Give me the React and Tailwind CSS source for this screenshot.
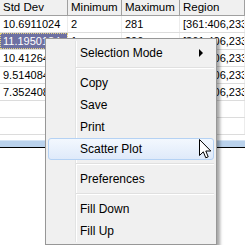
import React from 'react';

const cols = ['w-[68px]', 'w-[54px]', 'w-[58px]', 'flex-1'];

const rows = [
  ['10.6911024', '2', '281', '[361:406,233'],
  ['11.1950184', '1', '296', '[361:406,233'],
  ['10.4126435', '3', '274', '[361:406,233'],
  ['9.51408459', '2', '259', '[361:406,233'],
  ['7.35240841', '4', '212', '[361:406,233'],
  ['', '', '', ''],
  ['', '', '', ''],
];

function Item({ label, sub, hot }) {
  return (
    <div
      className={`relative z-10 flex items-center h-[22px] pl-[31px] pr-[10px] rounded-[3px] border ${
        hot
          ? 'border-[#b5d2f4] bg-gradient-to-b from-[#f3f8fe] to-[#dfeafa]'
          : 'border-transparent'
      }`}
    >
      <span className="whitespace-nowrap">{label}</span>
      {sub && (
        <span className="ml-auto w-0 h-0 border-y-[4px] border-y-transparent border-l-[4px] border-l-black" />
      )}
    </div>
  );
}

function Sep() {
  return (
    <div className="relative z-10 h-[8px] flex items-center pl-[28px]">
      <div className="w-full h-[2px] border-t border-[#e0e0e0] border-b border-b-white" />
    </div>
  );
}

export default function App() {
  return (
    <div className="relative w-[245px] h-[245px] overflow-hidden bg-white text-black font-['Liberation_Sans',Arial,sans-serif]">
      {/* header */}
      <div className="flex h-[16px] bg-[#f0f0f0] border-b border-[#a0a0a0] text-[11.5px] leading-[15px]">
        {['Std Dev', 'Minimum', 'Maximum', 'Region'].map((h, i) => (
          <div key={h} className={`${cols[i]} pl-[3px] border-r border-[#a0a0a0] whitespace-nowrap overflow-hidden`}>
            {h}
          </div>
        ))}
      </div>

      {/* rows */}
      {rows.map((r, ri) => (
        <div key={ri} className="flex h-[17px] border-b border-[#dcdcdc] text-[11px] leading-[16px]">
          {r.map((c, ci) => (
            <div
              key={ci}
              className={`${cols[ci]} pl-[3px] border-r border-[#ececec] whitespace-nowrap overflow-hidden ${
                ri === 1 && ci === 0 ? 'bg-[#6e71a2] text-white outline-1 outline-dotted outline-[#e6d27a] -outline-offset-1' : ''
              }`}
            >
              {c}
            </div>
          ))}
        </div>
      ))}

      {/* bottom bar */}
      <div className="mt-[5px] h-[7px] bg-[#bad2ec] border-t border-[#d6e5f5]" />
      <div className="h-[1px] bg-black" />

      {/* context menu */}
      <div className="absolute left-[45px] top-[38px] w-[172px] h-[207px] bg-[#f0f0f0] border border-[#979797] pt-[3px] px-[2px] text-[12px] shadow-[3px_3px_3px_rgba(0,0,0,0.35)]">
        <div className="absolute left-[29px] top-[2px] bottom-[2px] w-[2px] border-l border-[#e2e3e3] border-r border-r-white" />
        <Item label="Selection Mode" sub />
        <Sep />
        <Item label="Copy" />
        <Item label="Save" />
        <Item label="Print" />
        <Item label="Scatter Plot" hot />
        <Sep />
        <Item label="Preferences" />
        <Sep />
        <Item label="Fill Down" />
        <Item label="Fill Up" />
      </div>

      {/* mouse cursor */}
      <div className="absolute z-50 left-[199px] top-[139px] w-[13px] h-[21px]">
        <svg width="13" height="21" viewBox="0 0 13 21" className="block">
          <path
            d="M0.5 0.5 L0.5 16.5 L4.3 12.8 L6.8 18.8 L9.2 17.8 L6.8 12 L11.8 12 Z"
            fill="#ffffff"
            stroke="#000000"
            strokeWidth="1"
          />
        </svg>
      </div>
    </div>
  );
}
